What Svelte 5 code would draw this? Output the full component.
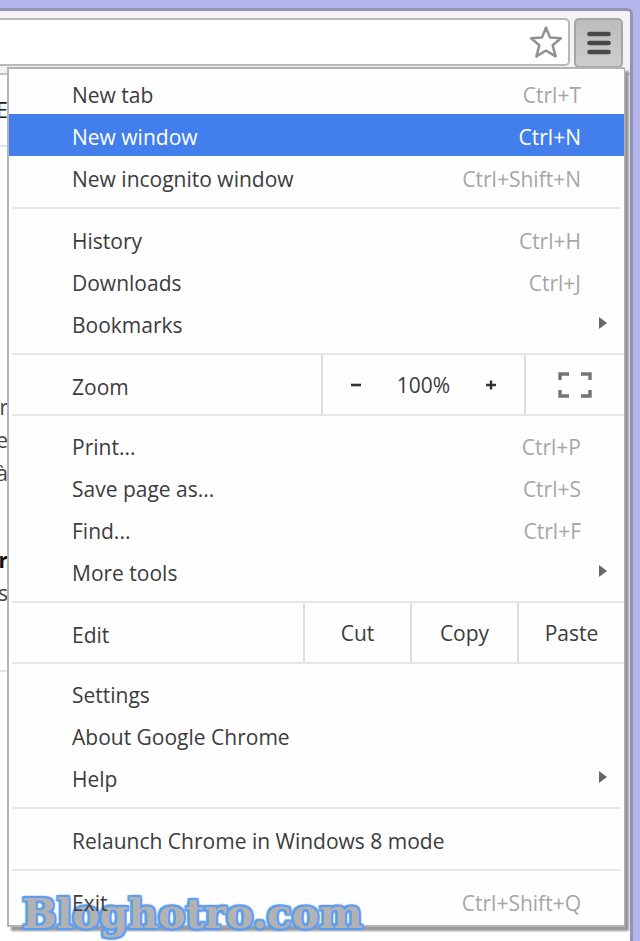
<script>
    let active = $state('New window');

    const pageLines = ['r', 'e', 'à'];

    const topGroups = [
        [
            { label: 'New tab', keys: 'Ctrl+T' },
            { label: 'New window', keys: 'Ctrl+N' },
            { label: 'New incognito window', keys: 'Ctrl+Shift+N' }
        ],
        [
            { label: 'History', keys: 'Ctrl+H' },
            { label: 'Downloads', keys: 'Ctrl+J' },
            { label: 'Bookmarks', sub: true }
        ]
    ];

    const pageGroup = [
        { label: 'Print...', keys: 'Ctrl+P' },
        { label: 'Save page as...', keys: 'Ctrl+S' },
        { label: 'Find...', keys: 'Ctrl+F' },
        { label: 'More tools', sub: true }
    ];

    const bottomGroups = [
        [
            { label: 'Settings' },
            { label: 'About Google Chrome' },
            { label: 'Help', sub: true }
        ],
        [{ label: 'Relaunch Chrome in Windows 8 mode' }],
        [{ label: 'Exit', keys: 'Ctrl+Shift+Q' }]
    ];

    let zoom = $state(100);
</script>

{#snippet item(entry)}
    <button
        class="item"
        class:active={active === entry.label}
        onmouseenter={() => (active = entry.label)}
    >
        <span class="label">{entry.label}</span>
        {#if entry.keys}
            <span class="keys">{entry.keys}</span>
        {/if}
        {#if entry.sub}
            <svg class="arrow" viewBox="0 0 8 12" aria-hidden="true">
                <path d="M0 0 L8 6 L0 12 Z" fill="#666" />
            </svg>
        {/if}
    </button>
{/snippet}

<div class="window">
    <header class="toolbar">
        <div class="omnibox">
            <input type="text" aria-label="Address" />
            <button class="star" aria-label="Bookmark this page">
                <svg viewBox="0 0 32 32">
                    <path
                        d="M16 2.5 L19.8 11.8 L30 12.5 L22.3 19.1 L25 29.5 L16 24 L7 29.5 L9.7 19.1 L2 12.5 L12.2 11.8 Z"
                        fill="#fff"
                        stroke="#929292"
                        stroke-width="2.4"
                        stroke-linejoin="round"
                    />
                </svg>
            </button>
        </div>
        <button class="menu-button" aria-label="Menu">
            <svg viewBox="0 0 24 24">
                <path d="M2.5 3 H21.5 M2.5 12 H21.5 M2.5 21 H21.5" stroke="#484848" stroke-width="4.6" stroke-linecap="round" />
            </svg>
        </button>
    </header>

    <div class="page">
        <div class="tab-strip">E</div>
        <div class="content">
            {#each pageLines as line}
                <p>{line}</p>
            {/each}
            <p class="heading">r</p>
            <p>s</p>
        </div>
    </div>

    <nav class="menu">
        {#each topGroups as group, i}
            {#if i > 0}<hr />{/if}
            {#each group as entry}
                {@render item(entry)}
            {/each}
        {/each}

        <div class="band">
            <span class="band-label">Zoom</span>
            <div class="zoom">
                <button aria-label="Zoom out" onclick={() => (zoom -= 10)}>
                    <svg viewBox="0 0 12 12"><path d="M1 6 H11" stroke="#333" stroke-width="2.6" /></svg>
                </button>
                <span>{zoom}%</span>
                <button aria-label="Zoom in" onclick={() => (zoom += 10)}>
                    <svg viewBox="0 0 12 12"><path d="M1 6 H11 M6 1.5 V10.5" stroke="#333" stroke-width="2.4" /></svg>
                </button>
            </div>
            <button class="fullscreen" aria-label="Full screen">
                <svg viewBox="0 0 34 26">
                    <path
                        d="M2 8 V2 H11 M23 2 H32 V8 M32 18 V24 H23 M11 24 H2 V18"
                        fill="none"
                        stroke="#747474"
                        stroke-width="3.4"
                    />
                </svg>
            </button>
        </div>

        {#each pageGroup as entry}
            {@render item(entry)}
        {/each}

        <div class="band">
            <span class="band-label">Edit</span>
            <button class="edit">Cut</button>
            <button class="edit">Copy</button>
            <button class="edit">Paste</button>
        </div>

        {#each bottomGroups as group, i}
            {#if i > 0}<hr />{/if}
            {#each group as entry}
                {@render item(entry)}
            {/each}
        {/each}

        <div class="watermark">Bloghotro.com</div>
    </nav>
</div>

<style>
    :global(body) {
        background: #b4b5ea;
        font-family: "Open Sans", "Noto Sans", sans-serif;
    }

    button {
        margin: 0;
        padding: 0;
        border: 0;
        background: none;
        color: inherit;
        font: inherit;
        cursor: pointer;
    }

    svg {
        display: block;
    }

    .window {
        position: relative;
        box-sizing: border-box;
        min-height: calc(100vh - 8px);
        margin: 0 7px 0 0;
        border-top: 3px solid #9293b4;
        border-right: 3px solid #9293b4;
        border-top-right-radius: 6px;
        background: #fff;
        color: #3c3c3c;
        font-size: 21px;
        overflow: hidden;
    }

    :global(#app) {
        padding-top: 8px;
    }

    .toolbar {
        display: flex;
        box-sizing: border-box;
        height: 64px;
        padding: 7px 7px 7px 0;
        gap: 4px;
        background: #f3f3f3;
        border-bottom: 2px solid #c4c4c4;
    }

    .omnibox {
        display: flex;
        flex: 1;
        align-items: center;
        padding-right: 5px;
        border: 2px solid #b9b9b9;
        border-left: 0;
        border-radius: 0 5px 5px 0;
        background: #fff;
    }

    .omnibox input {
        flex: 1;
        min-width: 0;
        border: 0;
        outline: 0;
        background: none;
        font: inherit;
    }

    .star svg {
        width: 34px;
        height: 34px;
    }

    .menu-button {
        display: flex;
        align-items: center;
        justify-content: center;
        box-sizing: border-box;
        width: 49px;
        height: 50px;
        border: 2px solid #a6a6a6;
        border-radius: 5px;
        background: linear-gradient(#bcbcbc, #cdcdcd);
    }

    .menu-button svg {
        width: 24px;
        height: 24px;
    }

    .page {
        width: 8px;
        overflow: hidden;
    }

    .tab-strip {
        display: flex;
        justify-content: flex-end;
        height: 70px;
        line-height: 70px;
        border-bottom: 2px solid #d5e6f2;
        color: #222;
    }

    .content {
        display: flex;
        flex-direction: column;
        align-items: flex-end;
        padding-top: 244px;
        border-bottom: 2px solid #e4e4e4;
        padding-bottom: 60px;
    }

    .content p {
        margin: 0;
        line-height: 33px;
        color: #444;
    }

    .content .heading {
        padding-top: 54px;
        color: #111;
        font-weight: bold;
    }

    .menu {
        position: absolute;
        top: 56px;
        left: 7px;
        right: 5px;
        box-sizing: border-box;
        padding: 3px 0;
        border: 2px solid #b4b4b4;
        border-width: 2px 1px 2px 2px;
        background: #fefefe;
        box-shadow: 4px 4px 2px #9a9a9a;
    }

    .item {
        display: flex;
        align-items: center;
        width: 100%;
        height: 42px;
        padding: 3px 43px 0 63px;
        box-sizing: border-box;
        text-align: left;
    }

    .label {
        position: relative;
        z-index: 2;
        flex: 1;
    }

    .keys {
        color: #a6a6a6;
    }

    .arrow {
        width: 8px;
        height: 12px;
        margin: 0 -26px 4px 0;
    }

    .active,
    .active .keys {
        background: #427fed;
        color: #fff;
    }

    hr {
        height: 2px;
        margin: 9px 3px;
        border: 0;
        background: #e6e6e6;
    }

    .band {
        display: flex;
        box-sizing: border-box;
        height: 63px;
        margin: 9px 0 8px 3px;
        border: 2px solid #e6e6e6;
        border-width: 2px 0;
    }

    .band > * {
        display: flex;
        align-items: center;
        justify-content: center;
        box-sizing: border-box;
        border-left: 2px solid #dedede;
    }

    .band .band-label {
        flex: 1;
        justify-content: flex-start;
        padding: 4px 0 0 60px;
        border: 0;
    }

    .zoom {
        width: 203px;
        gap: 35px;
    }

    .zoom svg {
        width: 12px;
        height: 12px;
    }

    .fullscreen {
        width: 100px;
    }

    .fullscreen svg {
        width: 34px;
        height: 26px;
    }

    .edit {
        width: 107px;
    }

    .watermark {
        position: absolute;
        left: 13px;
        bottom: -13px;
        z-index: 1;
        color: #b2b2b2;
        font: bold 41px/48px "DejaVu Serif", serif;
        -webkit-text-stroke: 1px #c9d6e8;
        paint-order: stroke fill;
        text-shadow:
            2px 0 1px #5f9df0,
            -2px 0 1px #5f9df0,
            0 2px 1px #5f9df0,
            0 -2px 1px #5f9df0,
            2px 2px 1px #5f9df0,
            -2px -2px 1px #5f9df0,
            2px -2px 1px #5f9df0,
            -2px 2px 1px #5f9df0;
        pointer-events: none;
    }
</style>
